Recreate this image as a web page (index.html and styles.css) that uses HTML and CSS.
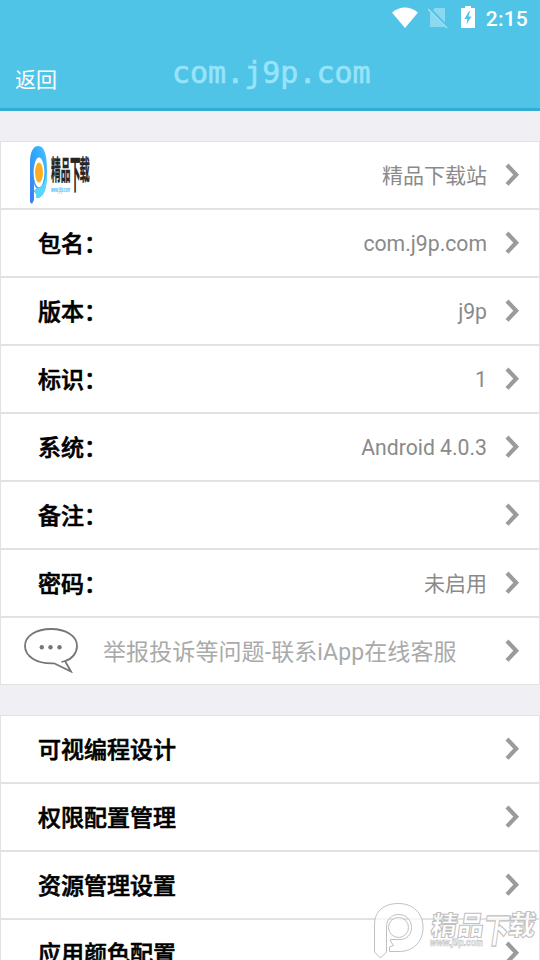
FILE: index.html
```html
<!DOCTYPE html>
<html lang="zh-CN">
<head>
<meta charset="utf-8">
<title>com.j9p.com</title>
<link rel="stylesheet" href="styles.css">
</head>
<body>
<svg class="defs" width="0" height="0">
  <symbol id="chevron" viewBox="0 0 16 24"><path d="M2 2 L11.200 11.700 L2 21.400" fill="none" stroke="#9b9b9b" stroke-width="4.200"/></symbol>
</svg>
<div class="screen">
  <header class="header">
    <div class="status">
      <svg class="wifi" width="26" height="22" viewBox="0 0 26 22"><path d="M0 5.5 Q13 -4.5 26 5.5 L13 21Z" fill="#fff"/></svg>
      <svg class="sim" width="20" height="22" viewBox="0 0 20 22"><path d="M7 0H17V19H2V5Z" fill="#8ad9f0"/><path d="M1 0L19 19" stroke="#50c4e6" stroke-width="3"/><path d="M0 1L19 20" stroke="#9bdff2" stroke-width="1.6"/></svg>
      <svg class="battery" width="14" height="22" viewBox="0 0 14 22"><path d="M0 2H4V0H10V2H14V22H0Z" fill="#fff"/><path d="M8 5L3.5 13H6.5L5.5 18.5L10.5 10.5H7.5L9 5Z" fill="#50c4e6"/></svg>
      <span class="time">2:15</span>
    </div>
    <div class="bar"><a class="back">返回</a><h1 class="title">com.j9p.com</h1></div>
  </header>
  <main class="lists">
    <section class="list">
      <div class="row">
        <svg class="logo" width="64" height="60" viewBox="0 0 64 60">
          <defs><linearGradient id="p" x1="0" y1="1" x2="1" y2="0"><stop offset="0" stop-color="#3c78f5"/><stop offset=".6" stop-color="#34a8fb"/><stop offset="1" stop-color="#45c5ff"/></linearGradient></defs>
          <path d="M2 18C2 7 5 1 10.500 1C16 1 19 9 19 26C19 43 16 53 8 53L8 49L6 46L9 43Q6 42 6 36L6 55L4 59L2 57Z" fill="url(#p)"/>
          <path d="M8 53L8 49L6 46L9 43C15 44 18 35 19 24C20 45 15 54 8 53Z" fill="#59d6fc"/>
          <ellipse cx="11" cy="27.500" rx="5.400" ry="15" fill="#fff"/><ellipse cx="11" cy="27.500" rx="4" ry="10" fill="#ffae22"/>
          <text class="logo-name" transform="translate(23 35) scale(.36 1)" font-size="27">精品</text>
          <text class="logo-name" transform="translate(42 43) scale(.3 1.100)" font-size="35">下</text>
          <text class="logo-name" transform="translate(51.500 35) scale(.38 1)" font-size="27">载</text>
          <text class="logo-url" x="23" y="47" textLength="19" lengthAdjust="spacingAndGlyphs">www.j9p.com</text>
        </svg>
        <span class="value">精品下载站</span><svg class="chevron"><use href="#chevron"/></svg>
      </div>
      <div class="row"><b class="label">包名：</b><span class="value latin">com.j9p.com</span><svg class="chevron"><use href="#chevron"/></svg></div>
      <div class="row"><b class="label">版本：</b><span class="value latin">j9p</span><svg class="chevron"><use href="#chevron"/></svg></div>
      <div class="row"><b class="label">标识：</b><span class="value latin">1</span><svg class="chevron"><use href="#chevron"/></svg></div>
      <div class="row"><b class="label">系统：</b><span class="value latin">Android 4.0.3</span><svg class="chevron"><use href="#chevron"/></svg></div>
      <div class="row"><b class="label">备注：</b><span class="value"></span><svg class="chevron"><use href="#chevron"/></svg></div>
      <div class="row"><b class="label">密码：</b><span class="value">未启用</span><svg class="chevron"><use href="#chevron"/></svg></div>
      <div class="row">
        <svg class="bubble" width="56" height="46" viewBox="0 0 56 46"><path d="M31 36.300C13 37 2 29 2 19C2 9 13 2 28 2C43 2 54 9 54 19C54 26 49 32 42 34L48 44.500L31 36.300M42 34L38.500 35" fill="none" stroke="#767676" stroke-width="1.800"/><g fill="#767676"><circle cx="18.800" cy="20.300" r="2.200"/><circle cx="27.500" cy="20.300" r="2.200"/><circle cx="36.500" cy="20.300" r="2.200"/></g></svg>
        <span class="contact">举报投诉等问题-联系iApp在线客服</span><svg class="chevron"><use href="#chevron"/></svg>
      </div>
    </section>
    <section class="list">
      <div class="row"><b class="label">可视编程设计</b><svg class="chevron"><use href="#chevron"/></svg></div>
      <div class="row"><b class="label">权限配置管理</b><svg class="chevron"><use href="#chevron"/></svg></div>
      <div class="row"><b class="label">资源管理设置</b><svg class="chevron"><use href="#chevron"/></svg></div>
      <div class="row"><b class="label">应用颜色配置</b><svg class="chevron"><use href="#chevron"/></svg></div>
    </section>
  </main>
  <svg class="watermark" width="168" height="60" viewBox="0 0 168 60">
    <g fill="#fff" fill-opacity=".7" stroke="#c0c0c0" stroke-width="1">
      <path fill-rule="evenodd" d="M2.500 52V25C2.500 11 12 3.500 26.500 3.500C41 3.500 51 13 51 27.500C51 42 41 51.500 27 51.500H17.500V47L21.500 45.500L18.500 41V39.500H28C35 39.500 39.500 34.500 39.500 27.500C39.500 20 34 14.500 27 14.500C19 14.500 14.500 19.500 14.500 27V52L8.500 58Z"/>
      <circle cx="26.500" cy="27.500" r="10"/>
      <g class="mark-name">
        <text transform="translate(58 35) skewX(-8)" font-size="26.500">精品</text>
        <text transform="translate(110 43) skewX(-8) scale(.88 1.200)" font-size="29">下</text>
        <text transform="translate(135 35) skewX(-8)" font-size="27.500">载</text>
      </g>
      <text class="mark-url" x="58" y="45.500" textLength="53" lengthAdjust="spacingAndGlyphs">www.j9p.com</text>
    </g>
  </svg>
</div>
</body>
</html>
```
FILE: styles.css
```css
* { box-sizing: border-box; }
body { margin: 0; background: #efeff4; font-family: Roboto, "Noto Sans CJK SC", sans-serif; }
.defs { position: absolute; }
.screen { position: relative; width: 540px; height: 960px; overflow: hidden; }
.header { height: 111px; background: #50c4e6; border-bottom: 3px solid #31add3; color: #fff; }
.status { display: flex; justify-content: flex-end; height: 36px; padding: 6px 12px 0 0; }
.sim { margin: 2px 0 0 10px; }
.wifi { margin-top: 1px; }
.battery { margin-left: 13px; }
.time { margin-left: 11px; font-size: 21px; line-height: 27px; font-weight: 500; letter-spacing: .2px; }
.bar { display: grid; grid-template-columns: 172px auto 1fr; height: 72px; }
.back { padding: 29px 0 0 15px; font-size: 21px; line-height: 31px; }
.title { margin: 0; padding-top: 19px; font: 30px/36px "DejaVu Sans Mono", monospace; color: #97e4fa; -webkit-text-stroke: .6px #97e4fa; }
.lists { display: flex; flex-direction: column; gap: 30px; padding-top: 30px; }
.row { display: flex; align-items: center; height: 68px; background: #fff; border: 1px solid #e2e2e2; padding: 0 18px 0 37px; }
.label { padding-top: 3px; font-size: 23px; line-height: 34px; font-weight: 500; color: #000; -webkit-text-stroke: .6px #000; }
.value { margin-left: auto; padding-top: 2px; font-size: 21px; line-height: 31px; color: #8a8a8a; }
.latin { padding-top: 1px; font-size: 21.2px; }
.chevron { width: 16px; height: 24px; margin-left: 18px; flex: none; }
.label + .chevron { margin-left: auto; }
.logo { margin-left: -10px; }
.logo-name { font-family: "Noto Sans CJK SC", sans-serif; font-weight: 700; fill: #252525; stroke: #252525; stroke-width: .5px; }
.logo-url { font: italic 700 7px "Liberation Sans", sans-serif; fill: #39bdfb; }
.bubble { margin-left: -15px; margin-top: -2px; flex: none; }
.contact { margin-left: 24px; margin-right: auto; padding-top: 3px; font-size: 23px; line-height: 34px; letter-spacing: .1px; color: #aaa; white-space: nowrap; }
.watermark { position: absolute; left: 372px; top: 900px; }
.mark-name { font-family: "Noto Sans CJK SC", sans-serif; font-weight: 900; }
.mark-url { font: italic 700 10px "Liberation Sans", sans-serif; stroke-width: .6px; }
```
